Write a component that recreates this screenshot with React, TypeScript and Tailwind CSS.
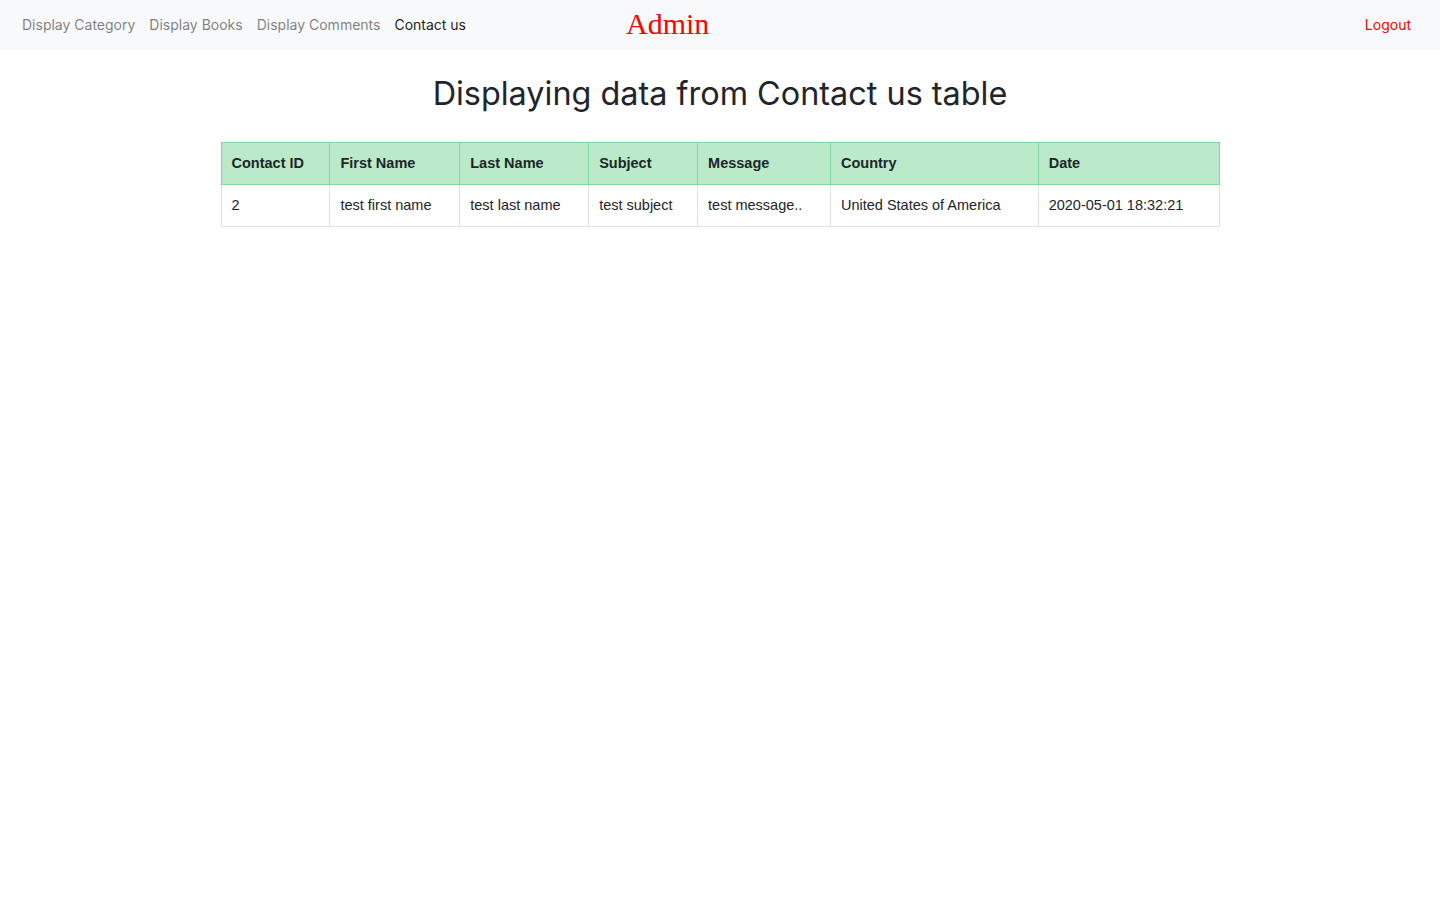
import React from "react";

const headers = ["Contact ID", "First Name", "Last Name", "Subject", "Message", "Country", "Date"];
const row = ["2", "test first name", "test last name", "test subject", "test message..", "United States of America", "2020-05-01 18:32:21"];
const widths = ["w-[109px]", "w-[130px]", "w-[129px]", "w-[109px]", "w-[133px]", "w-[208px]", "w-[181px]"];

export default function App() {
  return (
    <div className="min-h-[900px] bg-white" style={{ fontFamily: "Inter, 'Noto Sans', sans-serif" }}>
      <nav className="h-[50px] bg-[#f8f9fa] flex items-center px-[14px] pb-[2px] relative">
        <div className="flex items-center text-[14px] gap-[14px] pl-[8px]">
          <a className="text-black/50">Display Category</a>
          <a className="text-black/50">Display Books</a>
          <a className="text-black/50">Display Comments</a>
          <a className="text-black/90">Contact us</a>
        </div>
        <div className="absolute left-[626px] top-[6px] text-[30px] leading-[36px] text-[#ff0000]" style={{ fontFamily: "'Liberation Serif', serif" }}>
          Admin
        </div>
        <a className="ml-auto pr-[15px] text-[14px] text-[#ff0000]">Logout</a>
      </nav>
      <h2 className="text-center text-[32.4px] leading-[43px] text-[#212529] mt-[22px] mb-[27px] font-normal">
        Displaying data from Contact us table
      </h2>
      <div className="flex justify-center">
        <table className="border-collapse w-[999px] text-[14.5px] text-[#212529]" style={{ fontFamily: "'Liberation Sans', Arial, sans-serif" }}>
          <thead>
            <tr className="bg-[#baeac9]">
              {headers.map((h, i) => (
                <th key={h} className={`${widths[i]} h-[42px] border border-[#7fd99a] px-[10px] text-left font-bold align-middle`}>
                  {h}
                </th>
              ))}
            </tr>
          </thead>
          <tbody>
            <tr>
              {row.map((c, i) => (
                <td key={i} className={`${widths[i]} h-[42px] border border-[#dee2e6] px-[10px] align-middle`}>
                  {c}
                </td>
              ))}
            </tr>
          </tbody>
        </table>
      </div>
    </div>
  );
}
